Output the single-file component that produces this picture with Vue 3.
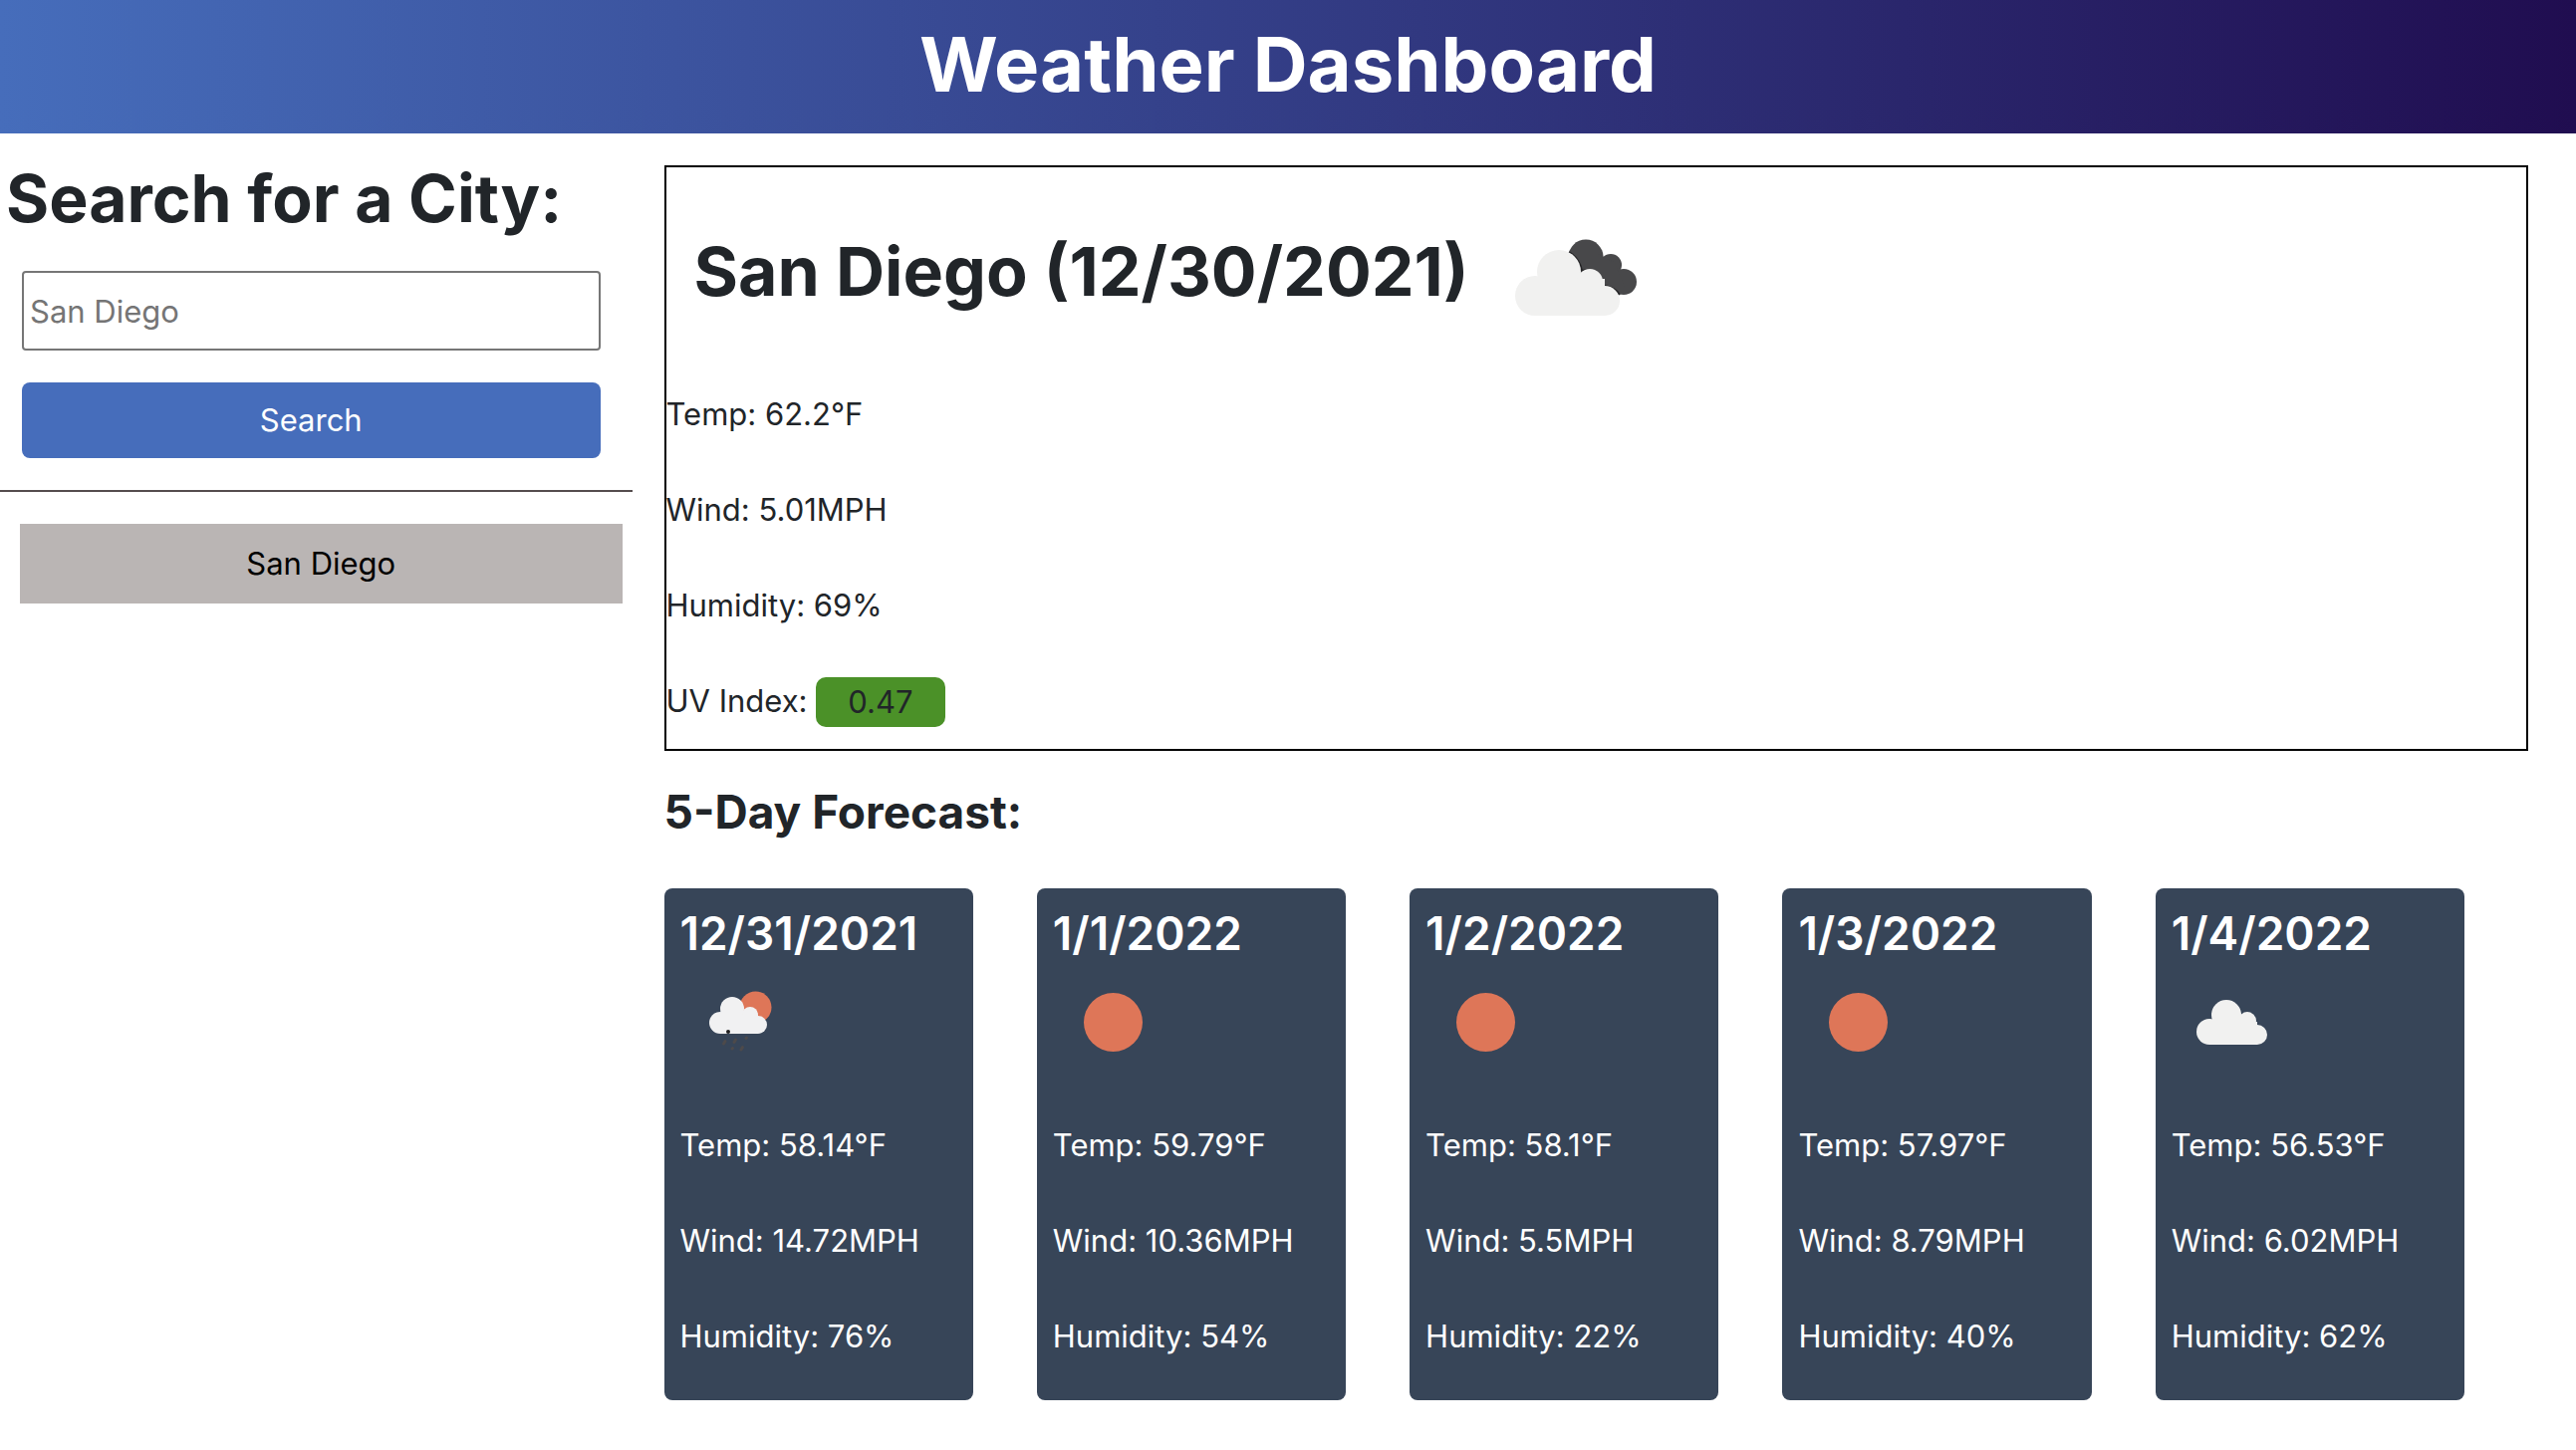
<script setup>
import { ref } from 'vue'

const query = ref('')
const history = ['San Diego']

const current = {
  title: 'San Diego (12/30/2021)',
  readings: ['Temp: 62.2°F', 'Wind: 5.01MPH', 'Humidity: 69%'],
  uv: '0.47',
}

const forecast = [
  { date: '12/31/2021', icon: 'rain', temp: '58.14', wind: '14.72', humidity: 76 },
  { date: '1/1/2022', icon: 'sun', temp: '59.79', wind: '10.36', humidity: 54 },
  { date: '1/2/2022', icon: 'sun', temp: '58.1', wind: '5.5', humidity: 22 },
  { date: '1/3/2022', icon: 'sun', temp: '57.97', wind: '8.79', humidity: 40 },
  { date: '1/4/2022', icon: 'cloud', temp: '56.53', wind: '6.02', humidity: 62 },
]
</script>

<template>
  <div class="page">
    <header class="banner">
      <h1>Weather Dashboard</h1>
    </header>

    <div class="layout">
      <aside class="sidebar">
        <form class="search" @submit.prevent>
          <h2><label for="city">Search for a City:</label></h2>
          <input id="city" v-model="query" type="text" placeholder="San Diego" />
          <button type="submit">Search</button>
        </form>
        <div class="history">
          <button v-for="city in history" :key="city" type="button">{{ city }}</button>
        </div>
      </aside>

      <main class="content">
        <section class="current">
          <div class="current-head">
            <h2>{{ current.title }}</h2>
            <svg class="current-icon" viewBox="0 0 200 200" aria-hidden="true">
              <g fill="#48484a">
                <circle cx="109" cy="78" r="17.5" />
                <circle cx="134" cy="86" r="11" />
                <circle cx="147" cy="103" r="13" />
                <path d="M93 74 120 74 138 84 148 108 142 116 118 106Z" />
              </g>
              <path
                d="M92 73q11 7 13 19q15-4 22 15q11 1 16 9"
                fill="none"
                stroke="#262628"
                stroke-width="2"
              />
              <g fill="#f1f1f0">
                <circle cx="82" cy="93" r="22" />
                <circle cx="113" cy="103" r="13" />
                <circle cx="58" cy="117" r="20" />
                <circle cx="128" cy="122" r="15" />
                <rect x="58" y="100" width="70" height="37" />
              </g>
            </svg>
          </div>
          <p v-for="line in current.readings" :key="line">{{ line }}</p>
          <p>UV Index: <span class="uv">{{ current.uv }}</span></p>
        </section>

        <h3 class="forecast-title">5-Day Forecast:</h3>

        <section class="forecast">
          <article v-for="day in forecast" :key="day.date" class="card">
            <h4>{{ day.date }}</h4>
            <svg viewBox="0 0 100 100" aria-hidden="true">
              <circle v-if="day.icon === 'sun'" cx="50.5" cy="50.5" r="29.5" fill="#de7658" />
              <g v-else-if="day.icon === 'cloud'" fill="#f1f1f0">
                <circle cx="45" cy="43" r="15" />
                <circle cx="66" cy="49" r="9" />
                <circle cx="28" cy="60" r="13" />
                <circle cx="76" cy="63" r="10" />
                <rect x="28" y="50" width="48" height="23" />
              </g>
              <g v-else>
                <circle cx="65.5" cy="35.5" r="16" fill="#de7658" />
                <g fill="#f1f1f2">
                  <circle cx="42" cy="37" r="12" />
                  <circle cx="60" cy="43" r="8" />
                  <circle cx="30" cy="51" r="11" />
                  <circle cx="68" cy="53" r="9" />
                  <rect x="30" y="43" width="38" height="19" />
                </g>
                <circle cx="38" cy="60" r="2" fill="#1f1f20" />
                <path
                  d="M35 69.5l-1.500 2.500M45.500 68l-1.500 2.500M56.500 66l-.5.5M42.500 76.500l-.5.5M52.500 75.500l-1.500 2.500"
                  fill="none"
                  stroke="#4d4a4b"
                  stroke-width="3"
                  stroke-linecap="round"
                />
              </g>
            </svg>
            <p>Temp: {{ day.temp }}°F</p>
            <p>Wind: {{ day.wind }}MPH</p>
            <p>Humidity: {{ day.humidity }}%</p>
          </article>
        </section>
      </main>
    </div>
  </div>
</template>

<style>
body {
  margin: 0;
  background: #fff;
}
</style>

<style scoped>
.page {
  font-family: Inter, "Liberation Sans", sans-serif;
  font-size: 31px;
  line-height: 48px;
  color: #212529;
}

h1,
h2,
h3,
h4,
p {
  margin: 0;
}

.banner {
  padding: 16px 0 22px;
  background: linear-gradient(to right, #466dbb, #200d50);
  color: #fff;
  text-align: center;
}

.banner h1 {
  font-size: 76px;
  line-height: 96px;
  font-weight: 700;
}

.layout {
  display: flex;
  gap: 32px;
  padding: 32px 48px 48px 0;
}

.sidebar {
  flex: 0 0 25%;
}

.search {
  display: flex;
  flex-direction: column;
  padding-bottom: 32px;
  border-bottom: 2px solid #554d4e;
}

.search h2 {
  padding: 0 0 8px 6px;
  font-size: 66px;
  line-height: 66px;
  font-weight: 700;
}

.search input,
.search button {
  box-sizing: border-box;
  margin: 32px 32px 0 22px;
  font: inherit;
}

.search input {
  height: 80px;
  padding: 0 6px;
  border: 2px solid #767676;
  border-radius: 4px;
  background: #fff;
  color: inherit;
}

.search input::placeholder {
  color: #757575;
  opacity: 1;
}

.search button {
  height: 76px;
  padding: 0;
  border: 0;
  border-radius: 8px;
  background: #466dbb;
  color: #fff;
}

.history {
  padding: 32px 10px 0 20px;
}

.history button {
  display: block;
  width: 100%;
  height: 80px;
  padding: 0;
  border: 0;
  background: #bab5b4;
  color: #000;
  font: inherit;
}

.content {
  flex: 1;
  min-width: 0;
}

.current {
  border: 2px solid #000;
}

.current-head {
  display: flex;
  align-items: center;
  height: 224px;
  padding-left: 28px;
}

.current-head h2 {
  padding-bottom: 16px;
  font-size: 68px;
  line-height: 88px;
  font-weight: 700;
}

.current-icon {
  width: 200px;
  height: 200px;
  margin-left: 8px;
}

.current p,
.card p {
  margin-bottom: 48px;
}

.current p:last-child {
  margin-bottom: 22px;
}

.uv {
  display: inline-block;
  padding: 0 32px;
  border-radius: 10px;
  background: #4b9128;
  line-height: 50px;
  vertical-align: top;
}

.forecast-title {
  margin: 32px 0 48px;
  font-size: 46px;
  line-height: 58px;
  font-weight: 700;
}

.forecast {
  display: grid;
  grid-template-columns: repeat(5, 1fr);
  gap: 64px;
  margin-right: 64px;
}

.card {
  padding: 16px 16px 0;
  border-radius: 8px;
  background: #374558;
  color: #fff;
}

.card p:last-child {
  margin-bottom: 40px;
}

.card h4 {
  margin-bottom: 10px;
  font-size: 46px;
  line-height: 58px;
  font-weight: 600;
}

.card svg {
  display: block;
  width: 100px;
  height: 100px;
  margin: 0 0 50px 10px;
}
</style>
